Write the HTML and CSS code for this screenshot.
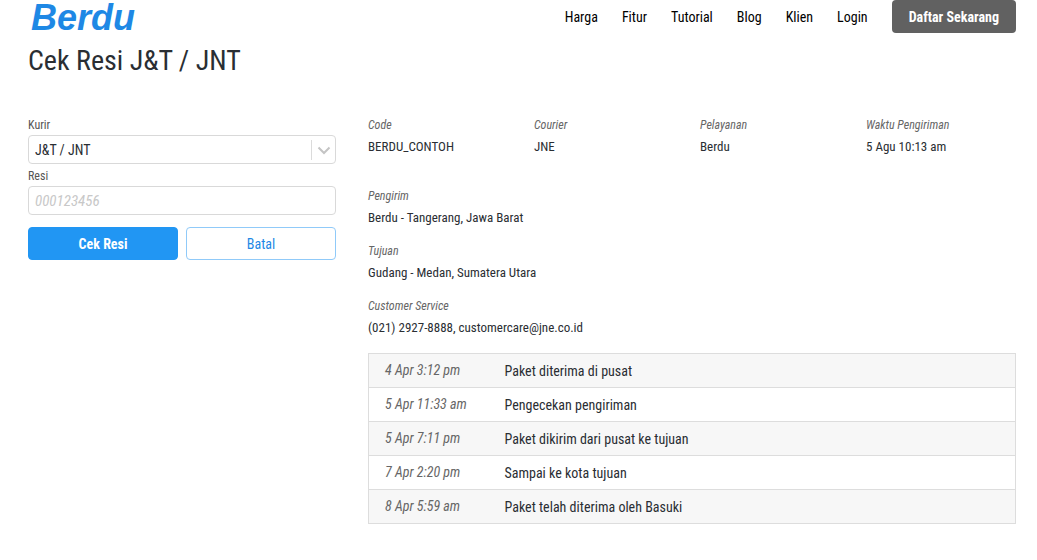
FILE: index.html
```html
<!DOCTYPE html>
<html lang="id">
<head>
<meta charset="utf-8">
<meta name="viewport" content="width=device-width, initial-scale=1">
<title>Cek Resi J&amp;T / JNT - Berdu</title>
<link rel="stylesheet" href="styles.css">
</head>
<body>
<header class="topbar">
  <a class="logo" href="#">Berdu</a>
  <nav class="nav">
    <a href="#">Harga</a>
    <a href="#">Fitur</a>
    <a href="#">Tutorial</a>
    <a href="#">Blog</a>
    <a href="#">Klien</a>
    <a href="#">Login</a>
    <a class="signup" href="#">Daftar Sekarang</a>
  </nav>
</header>
<main class="page">
  <h1 class="title">Cek Resi J&amp;T / JNT</h1>
  <div class="columns">
    <form class="form">
      <label class="label" for="kurir">Kurir</label>
      <div class="select-wrap">
        <select class="field select" id="kurir"><option>J&amp;T / JNT</option></select>
        <svg class="chevron" viewBox="0 0 24 20" aria-hidden="true">
          <path d="M.5 0v20" stroke="#dbdbdb" stroke-width="1"/>
          <path d="M7.5 7.5l5.5 5.5 5.5-5.5" fill="none" stroke="#c4c4c4" stroke-width="2"/>
        </svg>
      </div>
      <label class="label" for="resi">Resi</label>
      <input class="field" id="resi" type="text" placeholder="000123456">
      <div class="actions">
        <button class="btn primary" type="button">Cek Resi</button>
        <button class="btn" type="button">Batal</button>
      </div>
    </form>
    <section class="result">
      <dl class="summary">
        <div><dt>Code</dt><dd>BERDU_CONTOH</dd></div>
        <div><dt>Courier</dt><dd>JNE</dd></div>
        <div><dt>Pelayanan</dt><dd>Berdu</dd></div>
        <div><dt>Waktu Pengiriman</dt><dd>5 Agu 10:13 am</dd></div>
      </dl>
      <dl class="details">
        <div><dt>Pengirim</dt><dd>Berdu - Tangerang, Jawa Barat</dd></div>
        <div><dt>Tujuan</dt><dd>Gudang - Medan, Sumatera Utara</dd></div>
        <div><dt>Customer Service</dt><dd>(021) 2927-8888, customercare@jne.co.id</dd></div>
      </dl>
      <table class="history">
        <tbody>
          <tr><td class="time">4 Apr 3:12 pm</td><td>Paket diterima di pusat</td></tr>
          <tr><td class="time">5 Apr 11:33 am</td><td>Pengecekan pengiriman</td></tr>
          <tr><td class="time">5 Apr 7:11 pm</td><td>Paket dikirim dari pusat ke tujuan</td></tr>
          <tr><td class="time">7 Apr 2:20 pm</td><td>Sampai ke kota tujuan</td></tr>
          <tr><td class="time">8 Apr 5:59 am</td><td>Paket telah diterima oleh Basuki</td></tr>
        </tbody>
      </table>
    </section>
  </div>
</main>
</body>
</html>
```
FILE: styles.css
```css
* {
  box-sizing: border-box;
}

body {
  margin: 0;
  background: #fff;
  color: #2a2e33;
  font: 14px/20px "Roboto Condensed", "Liberation Sans Narrow", Roboto, sans-serif;
}

a {
  color: #000;
  text-decoration: none;
}

.topbar {
  display: flex;
  justify-content: space-between;
  align-items: flex-start;
  padding: 0 21px 0 31px;
}

.logo {
  color: #1e88e5;
  font: italic bold 36px/35px "Liberation Sans", sans-serif;
}

.nav {
  display: flex;
  align-items: center;
  gap: 24px;
}

.signup {
  padding: 7px 17px 6px;
  border-radius: 4px;
  background: #616161;
  color: #fff;
  font-weight: bold;
}

.page {
  padding: 8px 21px 24px 28px;
}

.title {
  margin: 0;
  font-size: 28px;
  line-height: 36px;
  font-weight: normal;
}

.columns {
  display: grid;
  grid-template-columns: 308px 1fr;
  gap: 32px;
  align-items: start;
  margin-top: 36px;
}

.form {
  display: flex;
  flex-direction: column;
}

.label {
  color: #555;
  font-size: 12px;
  line-height: 20px;
}

.field {
  width: 100%;
  height: 29px;
  padding: 0 6px;
  border: 1px solid #d9d9d9;
  border-radius: 4px;
  background: #fff;
  color: #2a2e33;
  font: inherit;
}

.field::placeholder {
  color: #c8c8c8;
  font-size: 15px;
  font-style: italic;
}

.select-wrap {
  position: relative;
  display: flex;
  margin-bottom: 2px;
}

.select {
  appearance: none;
}

.chevron {
  position: absolute;
  top: 5px;
  right: 1px;
  width: 24px;
  height: 20px;
  pointer-events: none;
}

.actions {
  display: grid;
  grid-template-columns: 1fr 1fr;
  gap: 8px;
  margin-top: 12px;
}

.btn {
  height: 33px;
  border: 1px solid #90caf9;
  border-radius: 4px;
  background: #fff;
  color: #1e88e5;
  font: inherit;
}

.primary {
  border-color: #2196f3;
  background: #2196f3;
  color: #fff;
  font-weight: bold;
}

dl,
dd {
  margin: 0;
}

dt {
  color: #666;
  font-size: 12px;
  font-style: italic;
  line-height: 21px;
}

dd {
  font-size: 13px;
  line-height: 21px;
}

.summary {
  display: grid;
  grid-template-columns: repeat(4, 1fr);
  gap: 16px;
}

.details {
  display: grid;
  gap: 13px;
  margin: 29px 0 15px;
}

.history {
  width: 100%;
  border-collapse: collapse;
}

.history tr {
  border: 1px solid #ddd;
}

.history tr:nth-child(odd) {
  background: #f7f7f7;
}

.history td {
  padding: 7px 16px 6px 0;
  vertical-align: top;
}

.history .time {
  width: 136px;
  padding: 6px 0 7px 16px;
  color: #666;
  font-style: italic;
}
```
